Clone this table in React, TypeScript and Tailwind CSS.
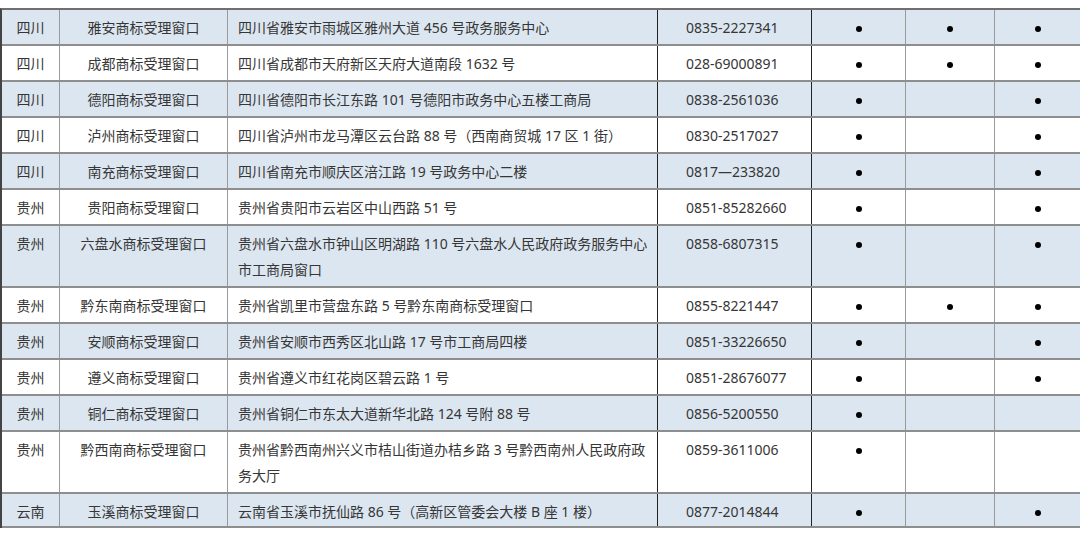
type Row = {
  province: string;
  office: string;
  address: string[];
  phone: string;
  marks: [boolean, boolean, boolean];
};

const ROWS: Row[] = [
  { province: "四川", office: "雅安商标受理窗口", address: ["四川省雅安市雨城区雅州大道 456 号政务服务中心"], phone: "0835-2227341", marks: [true, true, true] },
  { province: "四川", office: "成都商标受理窗口", address: ["四川省成都市天府新区天府大道南段 1632 号"], phone: "028-69000891", marks: [true, true, true] },
  { province: "四川", office: "德阳商标受理窗口", address: ["四川省德阳市长江东路 101 号德阳市政务中心五楼工商局"], phone: "0838-2561036", marks: [true, false, true] },
  { province: "四川", office: "泸州商标受理窗口", address: ["四川省泸州市龙马潭区云台路 88 号（西南商贸城 17 区 1 街）"], phone: "0830-2517027", marks: [true, false, true] },
  { province: "四川", office: "南充商标受理窗口", address: ["四川省南充市顺庆区涪江路 19 号政务中心二楼"], phone: "0817—233820", marks: [true, false, true] },
  { province: "贵州", office: "贵阳商标受理窗口", address: ["贵州省贵阳市云岩区中山西路 51 号"], phone: "0851-85282660", marks: [true, false, true] },
  { province: "贵州", office: "六盘水商标受理窗口", address: ["贵州省六盘水市钟山区明湖路 110 号六盘水人民政府政务服务中心", "市工商局窗口"], phone: "0858-6807315", marks: [true, false, true] },
  { province: "贵州", office: "黔东南商标受理窗口", address: ["贵州省凯里市营盘东路 5 号黔东南商标受理窗口"], phone: "0855-8221447", marks: [true, true, true] },
  { province: "贵州", office: "安顺商标受理窗口", address: ["贵州省安顺市西秀区北山路 17 号市工商局四楼"], phone: "0851-33226650", marks: [true, false, true] },
  { province: "贵州", office: "遵义商标受理窗口", address: ["贵州省遵义市红花岗区碧云路 1 号"], phone: "0851-28676077", marks: [true, false, true] },
  { province: "贵州", office: "铜仁商标受理窗口", address: ["贵州省铜仁市东太大道新华北路 124 号附 88 号"], phone: "0856-5200550", marks: [true, false, false] },
  { province: "贵州", office: "黔西南商标受理窗口", address: ["贵州省黔西南州兴义市桔山街道办桔乡路 3 号黔西南州人民政府政", "务大厅"], phone: "0859-3611006", marks: [true, false, false] },
  { province: "云南", office: "玉溪商标受理窗口", address: ["云南省玉溪市抚仙路 86 号（高新区管委会大楼 B 座 1 楼）"], phone: "0877-2014844", marks: [true, false, true] },
];

export default function App() {
  return (
    <div
      className="h-[537px] w-[1080px] overflow-hidden bg-white pt-[8px] text-[14px] leading-[26px] text-[#363636]"
      style={{ fontFamily: '"Noto Sans", "Noto Sans CJK SC", sans-serif' }}
    >
      <div className="w-[1092px] border-t-2 border-l-2 border-t-[#6f6f6f] border-l-[#444444]">
        {ROWS.map((row, index) => (
          <TableRow key={index} row={row} shaded={index % 2 === 0} last={index === ROWS.length - 1} />
        ))}
      </div>
    </div>
  );
}

function TableRow({ row, shaded, last }: { row: Row; shaded: boolean; last: boolean }) {
  const tall = row.address.length > 1;
  return (
    <div
      className={`grid grid-cols-[58px_168px_430px_154px_94px_89px_86px_13px] border-b-2 border-[#8e8e8e] ${
        shaded ? "bg-[#dce6f1]" : "bg-white"
      } ${tall ? "h-[62px]" : last ? "h-[34px]" : "h-[36px]"}`}
    >
      <div className="border-r border-[#9a9a9a] pt-[5px] text-center">{row.province}</div>
      <div className="border-r border-[#9a9a9a] pt-[5px] text-center">{row.office}</div>
      <div className="border-r border-[#222222] pt-[5px] pl-[10px] whitespace-nowrap">
        {row.address.map((line, i) => (
          <div key={i}>{line}</div>
        ))}
      </div>
      <div className="border-r border-[#222222] pt-[5px] pl-[28px]">{row.phone}</div>
      {row.marks.map((on, i) => (
        <div key={i} className={`flex justify-center pt-[16px] ${i < 2 ? "border-r border-[#9a9a9a]" : ""}`}>
          {on ? <span className="h-[6px] w-[6px] rounded-full bg-black" /> : null}
        </div>
      ))}
      <div />
    </div>
  );
}
